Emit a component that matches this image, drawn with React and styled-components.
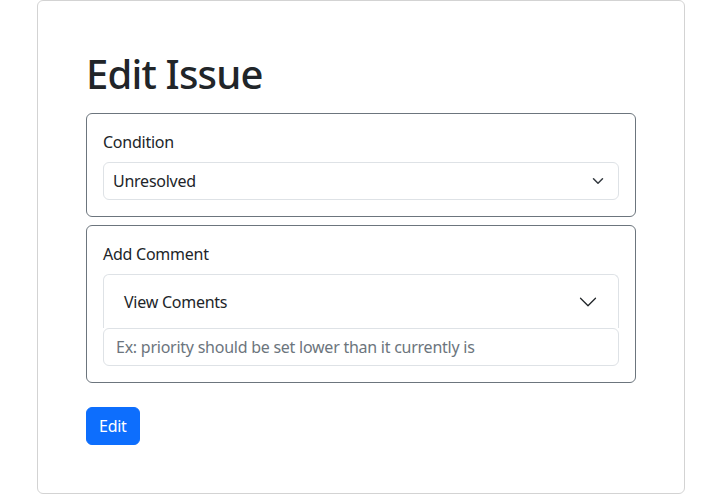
import styled, { createGlobalStyle } from "styled-components";

const GlobalStyle = createGlobalStyle`
  body {
    margin: 0;
    background: #fff;
    font-family: "Noto Sans", "Open Sans", sans-serif;
    color: #212529;
    font-size: 16px;
    line-height: 1.5;
    letter-spacing: -0.25px;
  }
  * { box-sizing: border-box; }
`;

const Card = styled.div`
  width: 648px;
  height: 494px;
  margin-left: 37px;
  border: 1px solid #d3d3d3;
  border-radius: 6px;
  padding: 48px;
`;

const Title = styled.h1`
  margin: 0 0 8px;
  font-size: 40px;
  font-weight: 500;
  letter-spacing: -0.8px;
  line-height: 50px;
  height: 56px;
`;

const Group = styled.div`
  border: 1px solid #6c757d;
  border-radius: 6px;
  padding: 16px;
  margin-bottom: 8px;
`;

const Label = styled.label`
  display: block;
  margin-bottom: 8px;
  line-height: 24px;
`;

const SelectBox = styled.div`
  height: 38px;
  border: 1px solid #dee2e6;
  border-radius: 6px;
  padding: 0 36px 0 9px;
  display: flex;
  align-items: center;
  position: relative;
  & svg {
    position: absolute;
    right: 12px;
    top: 12px;
  }
`;

const AccordionItem = styled.div`
  height: 54px;
  border: 1px solid #dee2e6;
  border-bottom: none;
  border-radius: 6px 6px 0 0;
  display: flex;
  align-items: center;
  justify-content: space-between;
  padding: 0 20px;
`;

const Input = styled.div`
  height: 38px;
  border: 1px solid #dee2e6;
  border-radius: 6px;
  padding: 0 12px;
  display: flex;
  align-items: center;
  color: #6c757d;
`;

const Button = styled.button`
  margin-top: 16px;
  height: 38px;
  padding: 0 12px;
  border: 1px solid #0d6efd;
  background: #0d6efd;
  color: #fff;
  border-radius: 6px;
  font: inherit;
  letter-spacing: inherit;
`;

const SmallChevron = () => (
  <svg width="16" height="12" viewBox="0 0 16 16" fill="none" stroke="#343a40" strokeWidth="2" strokeLinecap="round" strokeLinejoin="round">
    <path d="M2 5l6 6 6-6" />
  </svg>
);

const BigChevron = () => (
  <svg width="20" height="20" viewBox="0 0 16 16" fill="#212529">
    <path fillRule="evenodd" d="M1.646 4.646a.5.5 0 0 1 .708 0L8 10.293l5.646-5.647a.5.5 0 0 1 .708.708l-6 6a.5.5 0 0 1-.708 0l-6-6a.5.5 0 0 1 0-.708z" />
  </svg>
);

export default function App() {
  return (
    <>
      <GlobalStyle />
      <Card>
        <Title>Edit Issue</Title>
        <Group>
          <Label>Condition</Label>
          <SelectBox>
            Unresolved
            <SmallChevron />
          </SelectBox>
        </Group>
        <Group>
          <Label>Add Comment</Label>
          <AccordionItem>
            View Coments
            <BigChevron />
          </AccordionItem>
          <Input>Ex: priority should be set lower than it currently is</Input>
        </Group>
        <Button>Edit</Button>
      </Card>
    </>
  );
}
